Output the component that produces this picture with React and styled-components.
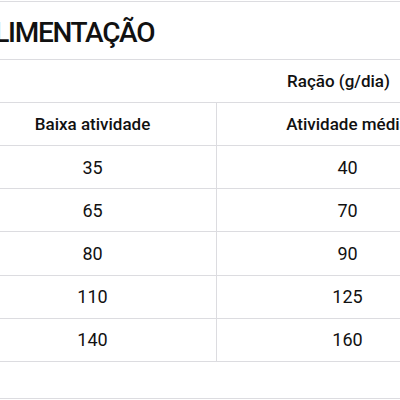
import React from 'react';
import styled, { createGlobalStyle } from 'styled-components';

const GlobalStyle = createGlobalStyle`
  html, body {
    margin: 0;
    padding: 0;
    background: #ffffff;
  }
  body {
    font-family: Roboto, "Noto Sans", "Liberation Sans", sans-serif;
    color: #111111;
  }
`;

const Frame = styled.div`
  width: 400px;
  height: 400px;
  overflow: hidden;
  padding-top: 1px;
  box-sizing: border-box;
`;

const Card = styled.section`
  margin-left: -31px;
  width: 739px;
  border-top: 1px solid #dcdce0;
  border-bottom: 1px solid #dcdce0;
`;

const Title = styled.h2`
  margin: 0;
  padding: 3px 0 0 8px;
  height: 58px;
  box-sizing: border-box;
  line-height: 55px;
  font-size: 28px;
  font-weight: 500;
  letter-spacing: -1.3px;
  border-bottom: 1px solid #dcdce0;
`;

const Table = styled.table`
  width: 739px;
  border-collapse: separate;
  border-spacing: 0;
  table-layout: fixed;
`;

const Cell = styled.td`
  box-sizing: border-box;
  height: ${(p) => p.$h}px;
  padding: 0;
  text-align: center;
  vertical-align: middle;
  border-bottom: 1px solid #dcdce0;
  border-right: ${(p) => (p.$divider ? '1px solid #dcdce0' : 'none')};
  font-size: ${(p) => (p.$head ? '17px' : '18px')};
  font-weight: ${(p) => (p.$head ? 500 : 400)};
`;

const Footer = styled.div`
  height: 36px;
`;

const levels = ['Baixa atividade', 'Atividade média', 'Atividade alta'];

const rows = [
  [35, 40, 45],
  [65, 70, 80],
  [80, 90, 100],
  [110, 125, 140],
  [140, 160, 180],
];

const App = () => {
  return (
    <Frame>
      <GlobalStyle />
      <Card>
        <Title>ALIMENTAÇÃO</Title>
        <Table>
          <colgroup>
            <col style={{ width: 248 }} />
            <col style={{ width: 262 }} />
            <col style={{ width: 229 }} />
          </colgroup>
          <thead>
            <tr>
              <Cell as="th" colSpan={3} $head $h={43}>Ração (g/dia)</Cell>
            </tr>
            <tr>
              {levels.map((label, i) => (
                <Cell as="th" key={label} $head $h={43} $divider={i < 2}>{label}</Cell>
              ))}
            </tr>
          </thead>
          <tbody>
            {rows.map((row, r) => (
              <tr key={r}>
                {row.map((value, i) => (
                  <Cell key={i} $h={43.2} $divider={i < 2}>{value}</Cell>
                ))}
              </tr>
            ))}
          </tbody>
        </Table>
        <Footer />
      </Card>
    </Frame>
  );
};

export default App;
